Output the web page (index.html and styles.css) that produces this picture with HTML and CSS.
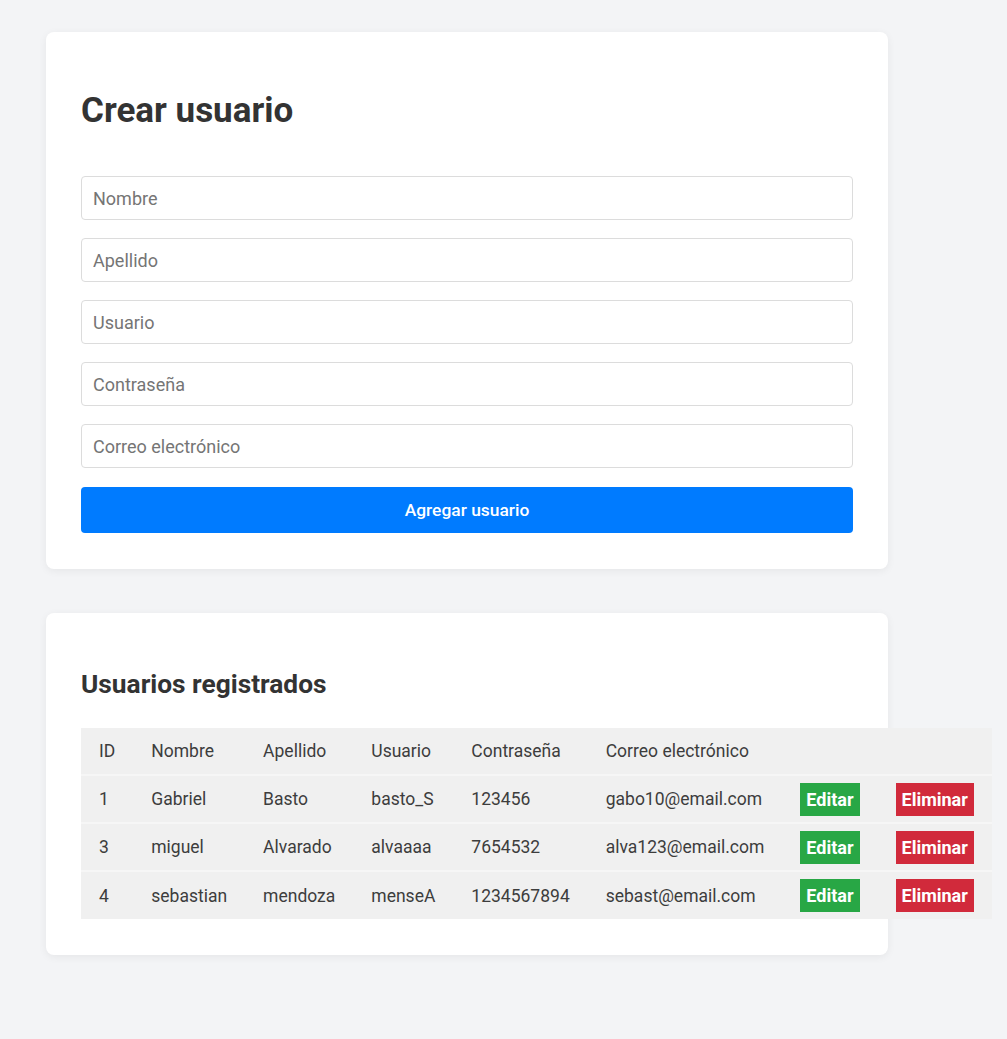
FILE: index.html
```html
<!DOCTYPE html>
<html lang="es">
<head>
<meta charset="utf-8">
<title>Usuarios</title>
<link rel="stylesheet" href="styles.css">
</head>
<body>
<main class="page">
  <section class="card">
    <h1 class="title">Crear usuario</h1>
    <form class="form">
      <input class="field" type="text" placeholder="Nombre">
      <input class="field" type="text" placeholder="Apellido">
      <input class="field" type="text" placeholder="Usuario">
      <input class="field" type="password" placeholder="Contraseña">
      <input class="field" type="email" placeholder="Correo electrónico">
      <button class="submit" type="button">Agregar usuario</button>
    </form>
  </section>
  <section class="card card-table">
    <h2 class="subtitle">Usuarios registrados</h2>
    <table class="users">
      <thead>
        <tr><th>ID</th><th>Nombre</th><th>Apellido</th><th>Usuario</th><th>Contraseña</th><th>Correo electrónico</th><th></th><th></th></tr>
      </thead>
      <tbody>
        <tr><td>1</td><td>Gabriel</td><td>Basto</td><td>basto_S</td><td>123456</td><td>gabo10@email.com</td><td><button class="btn btn-edit" type="button">Editar</button></td><td><button class="btn btn-del" type="button">Eliminar</button></td></tr>
        <tr><td>3</td><td>miguel</td><td>Alvarado</td><td>alvaaaa</td><td>7654532</td><td>alva123@email.com</td><td><button class="btn btn-edit" type="button">Editar</button></td><td><button class="btn btn-del" type="button">Eliminar</button></td></tr>
        <tr><td>4</td><td>sebastian</td><td>mendoza</td><td>menseA</td><td>1234567894</td><td>sebast@email.com</td><td><button class="btn btn-edit" type="button">Editar</button></td><td><button class="btn btn-del" type="button">Eliminar</button></td></tr>
      </tbody>
    </table>
  </section>
</main>
</body>
</html>
```
FILE: styles.css
```css
* { box-sizing: border-box; }
html, body { margin: 0; padding: 0; }
body {
  background: #f3f4f6;
  font-family: Roboto, "Liberation Sans", Arial, sans-serif;
  color: #333;
}
.page {
  padding: 32px 46px 84px;
  display: flex;
  flex-direction: column;
  gap: 44px;
}
.card {
  width: 842px;
  background: #fff;
  border-radius: 8px;
  box-shadow: 0 2px 8px rgba(0, 0, 0, 0.06);
  padding: 35px 35px 36px;
}
.title {
  font-size: 35px;
  font-weight: 700;
  line-height: 40px;
  margin: 24px 0 45px;
  color: #333;
}
.form {
  display: flex;
  flex-direction: column;
  gap: 18px;
}
.field {
  height: 44px;
  border: 1px solid #dcdcdc;
  border-radius: 4px;
  padding: 0 11px;
  font-family: inherit;
  font-size: 18px;
  color: #333;
  background: #fff;
}
.field::placeholder { color: #757575; }
.submit {
  height: 46px;
  margin-top: 1px;
  border: none;
  border-radius: 4px;
  background: #007bff;
  color: #fff;
  font-family: inherit;
  font-size: 17.4px;
  font-weight: 500;
}
.subtitle {
  font-size: 26.3px;
  font-weight: 700;
  line-height: 31px;
  margin: 21px 0 28px;
  color: #333;
}
.users {
  border-collapse: collapse;
  background: #f0f0f0;
  white-space: nowrap;
  font-size: 17.5px;
  color: #3d3d3d;
}
.users th {
  font-weight: 400;
  text-align: left;
  height: 47px;
  padding: 0 18px;
  border-bottom: 2px solid #f6f6f6;
}
.users td {
  height: 48px;
  padding: 0 18px;
  border-bottom: 2px solid #f6f6f6;
}
.users tbody tr:last-child td { border-bottom: none; }
.btn {
  border: none;
  border-radius: 0;
  height: 33px;
  padding: 0 6px;
  color: #fff;
  font-family: inherit;
  font-size: 18px;
  font-weight: 700;
  vertical-align: middle;
}
.btn-edit { background: #28a745; }
.btn-del { background: #d12a3b; }
```
